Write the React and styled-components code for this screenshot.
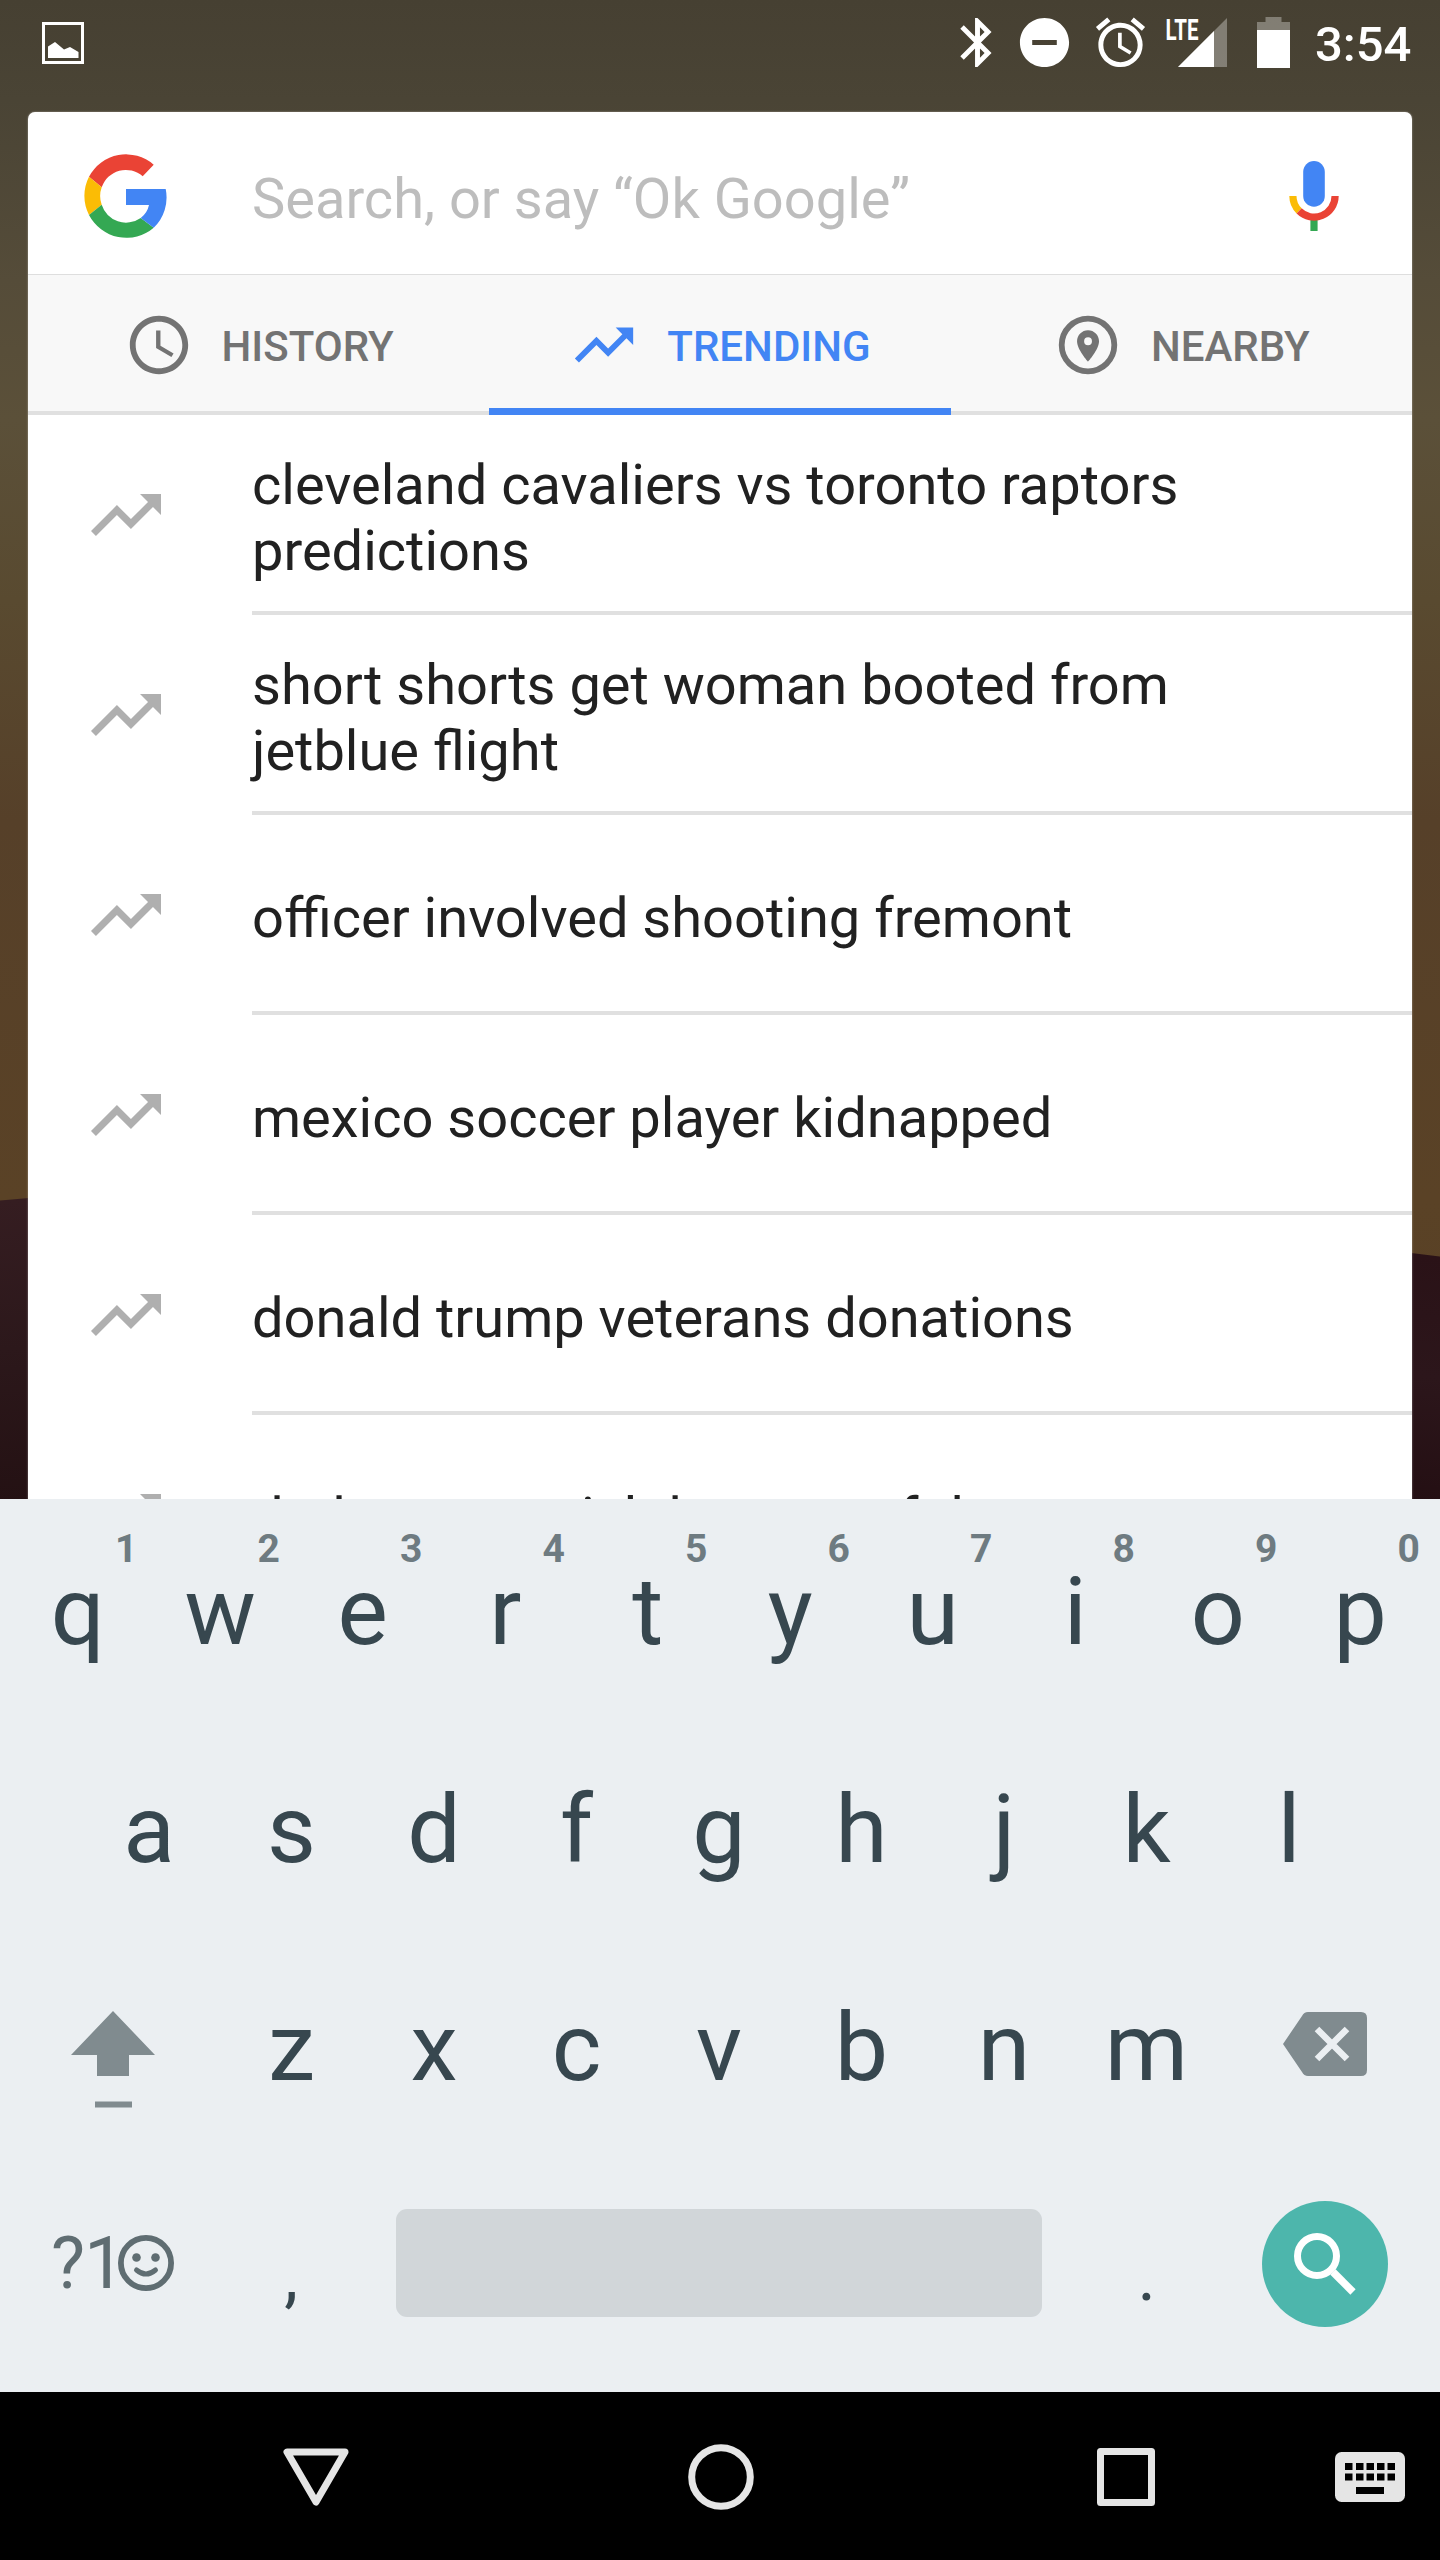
import React, { Component } from "react"
import styled, { createGlobalStyle } from "styled-components"
import { MdAlarm, MdBluetooth, MdDoNotDisturbOn, MdSchedule, MdTrendingUp } from "react-icons/md"

const GlobalStyle = createGlobalStyle`
  * { box-sizing: border-box; }
  body {
    margin: 0;
    background: #000;
    font-family: Roboto, "Noto Sans", sans-serif;
  }
  svg { display: block; flex: none; }
`;

const Screen = styled.div`
  display: flex;
  flex-direction: column;
  width: 1440px;
  height: 2560px;
  overflow: hidden;
`;

const Wallpaper = styled.div`
  height: 1499px;
  overflow: hidden;
  background:
    linear-gradient(175deg, transparent 3px, #351d21 4px, #2c181b 50%, #241113 100%) 0 1197px / 28px 304px no-repeat,
    linear-gradient(187deg, transparent 4px, #2a1217 5px, #2c161b 50%, #240f13 100%) 1412px 1252px / 28px 250px no-repeat,
    linear-gradient(#464032 0, #4a4435 100px, #554c39 280px, #5b5039 420px, #594a30 600px, #564029 820px, #5a4226 1200px, #573f24 1499px);
`;

const StatusBar = styled.div`
  display: flex;
  align-items: center;
  height: 85px;
  padding: 0 28px 0 42px;
  color: #fff;
`;

const StatusIcon = styled.span`
  margin-left: ${props => props.$gap}px;
`;

const Clock = styled.span`
  margin: 0 0 -4px 25px;
  font-size: 49px;
  font-weight: 500;
  line-height: 56px;
`;

const Card = styled.div`
  height: 1500px;
  margin: 27px 28px 0;
  border-radius: 7px 7px 0 0;
  background: #fff;
  box-shadow: 0 0 2px rgba(255, 255, 255, 0.5);
`;

const SearchBox = styled.div`
  display: flex;
  align-items: center;
  height: 163px;
  padding: 6px 73px 0 56px;
  border-bottom: 1px solid #dedede;
`;

const Hint = styled.span`
  flex: 1;
  padding: 6px 0 0 84px;
  color: #bdbdbd;
  font-size: 56px;
  line-height: 66px;
`;

const Tabs = styled.div`
  display: flex;
  height: 140px;
  background: #f8f8f8;
  box-shadow: inset 0 -4px 0 #e0e0e0;
`;

const Tab = styled.div`
  display: flex;
  flex: 1;
  align-items: center;
  justify-content: center;
  gap: 28px;
  padding-top: ${props => (props.$active ? "7px" : "0")};
  border-bottom: ${props => (props.$active ? "7px solid #4285f4" : "none")};
  color: ${props => (props.$active ? "#4285f4" : "#737373")};
  font-size: 42px;
  font-weight: 500;
  line-height: 50px;

  span { padding-top: 3px; }
`;

const Row = styled.div`
  display: flex;
  align-items: center;
  height: 200px;
  padding-left: 56px;
  color: #afafaf;
`;

const Suggestion = styled.div`
  display: flex;
  flex: 1;
  align-items: center;
  height: 200px;
  margin-left: 84px;
  padding: 10px 180px 0 0;
  border-bottom: 4px solid #e0e0e0;
  color: #212121;
  font-size: 56px;
  line-height: 66px;
`;

const Keyboard = styled.div`
  height: 893px;
  padding: 4px 8px 0 6px;
  background: #ebeff2;
  color: #37474f;
`;

const KeyRow = styled.div`
  display: flex;
  justify-content: center;
  height: 218px;
`;

const Key = styled.div`
  position: relative;
  display: flex;
  justify-content: center;
  width: 142.5px;
  height: 218px;
  padding-top: ${props => (props.$small ? 79 : 54)}px;
`;

const Letter = styled.span`
  font-size: ${props => (props.$small ? 70 : 95)}px;
  line-height: ${props => (props.$small ? 80 : 110)}px;
`;

const KeyNumber = styled.span`
  position: absolute;
  top: 26px;
  right: 11.5px;
  color: #6e7b81;
  font-size: 39px;
  font-weight: 700;
  line-height: 40px;
`;

const IconKey = styled.div`
  display: flex;
  justify-content: center;
  width: 213.9px;
  padding-top: ${props => props.$top}px;
  color: #808b8f;
`;

const SymbolKey = styled.div`
  display: flex;
  align-items: center;
  width: 213.9px;
  height: 212px;
  padding-left: 45px;
  color: #5f6d72;
  font-size: 72px;
  letter-spacing: -1px;

  svg { margin-left: -6px; }
`;

const SpaceBar = styled.div`
  width: 646px;
  height: 108px;
  margin: 52px 34px 0 33px;
  border-radius: 11px;
  background: #d1d6d9;
`;

const SearchKey = styled.div`
  display: flex;
  align-items: center;
  justify-content: center;
  width: 126px;
  height: 126px;
  border-radius: 50%;
  background: #4db6ac;
`;

const NavBar = styled.div`
  display: flex;
  align-items: center;
  height: 168px;
  padding: 1px 34px 0 283px;
  background: #000;
  color: #e5e5e5;
`;

const NavButton = styled.div`
  margin-left: ${props => props.$gap || 0}px;
`;

const PictureIcon = () => (
  <svg width="42" height="42" viewBox="0 0 42 42" fill="#fff">
    <path d="M1.5 1.5h39v39h-39z" fill="none" stroke="#fff" strokeWidth="3" />
    <path d="M6 24.5L13 20l9 7.5 6-2.5 8.5 5V36H6z" />
  </svg>
)

const SignalIcon = () => (
  <svg width="60" height="50" viewBox="0 0 60 50" fill="#fff" overflow="visible">
    <path d="M60 0v49H11z" opacity="0.32" />
    <path d="M47 13v36H11z" />
    <text x="-1.500" y="22" fontSize="29" fontWeight="700" textLength="33" lengthAdjust="spacingAndGlyphs">LTE</text>
  </svg>
)

const BatteryIcon = () => (
  <svg width="33" height="51" viewBox="0 0 33 51" fill="#fff">
    <path d="M8.5 0h16v5H33v8H0V5h8.500z" opacity="0.32" />
    <path d="M0 13h33v38H0z" />
  </svg>
)

const GoogleIcon = () => (
  <svg width="84" height="84" viewBox="0 0 84 84">
    <path fill="#ea4335" d="M5 22.700A42 42 0 0 1 69.700 10.700L58.700 22.300A25.500 25.500 0 0 0 17.700 33.300z" />
    <path fill="#fbbc05" d="M5 22.700A42 42 0 0 0 5 61L17.700 50.700A25.500 25.500 0 0 1 17.700 33.300z" />
    <path fill="#34a853" d="M5 61A42 42 0 0 0 69.700 73.700L56.700 64A25.500 25.500 0 0 1 17.700 50.700z" />
    <path fill="#4285f4" d="M42 35H81.700A42 42 0 0 1 69.700 73.700L56.700 64A22 22 0 0 0 65 51H42z" />
  </svg>
)

const MicIcon = () => (
  <svg width="50" height="70" viewBox="0 0 50 70" fill="none" strokeWidth="7.200">
    <rect x="14.200" width="21.600" height="45.700" rx="10.800" fill="#4285f4" />
    <path d="M25 58v12" stroke="#34a853" />
    <path d="M3.900 35A21.100 21.100 0 0 0 10.100 49.900" stroke="#fbbc05" />
    <path d="M10.100 49.900A21.100 21.100 0 0 0 46.100 35" stroke="#ea4335" />
  </svg>
)

const NearbyIcon = () => (
  <svg width="70" height="70" viewBox="0 0 70 70" fill="currentColor">
    <circle cx="35" cy="35" r="26.300" fill="none" stroke="currentColor" strokeWidth="5.800" />
    <path
      transform="translate(16.200 17.100) scale(1.570)"
      d="M12 2C8.130 2 5 5.130 5 9c0 5.250 7 13 7 13s7-7.750 7-13c0-3.870-3.130-7-7-7zm0 9.500a2.500 2.500 0 0 1 0-5 2.500 2.500 0 0 1 0 5z"
    />
  </svg>
)

const ShiftIcon = () => (
  <svg width="84" height="97" viewBox="0 0 84 97" fill="currentColor">
    <path d="M42 0l42 44H58v21H26V44H0zM24 90.500h37v6H24z" />
  </svg>
)

const BackspaceIcon = () => (
  <svg width="84" height="64" viewBox="0 0 84 64">
    <path fill="currentColor" d="M25 0h53q6 0 6 6v52q0 6-6 6H25q-4 0-6-4L0 32 19 4q2-4 6-4z" />
    <path d="M34 17l30 30M64 17L34 47" stroke="#ebeff2" strokeWidth="6.500" />
  </svg>
)

const SmileyIcon = () => (
  <svg width="56" height="56" viewBox="0 0 56 56" fill="none" stroke="currentColor" strokeWidth="5.800">
    <circle cx="28" cy="28" r="25.100" />
    <g fill="currentColor" stroke="none">
      <circle cx="18.500" cy="22.500" r="4.300" />
      <circle cx="37.500" cy="22.500" r="4.300" />
    </g>
    <path d="M18.500 35q9.500 8 19 0" strokeWidth="5" strokeLinecap="round" />
  </svg>
)

const MagnifierIcon = () => (
  <svg width="62" height="62" viewBox="0 0 62 62" fill="none" stroke="#fff">
    <circle cx="23" cy="23" r="19.500" strokeWidth="7" />
    <path d="M39 39l20 20" strokeWidth="7.500" />
  </svg>
)

const BackIcon = () => (
  <svg width="66" height="58" viewBox="0 0 66 58" fill="none" stroke="currentColor" strokeWidth="7" strokeLinejoin="round">
    <path d="M4 4h58L33 54z" />
  </svg>
)

const HomeIcon = () => (
  <svg width="66" height="66" viewBox="0 0 66 66" fill="none" stroke="currentColor" strokeWidth="7">
    <circle cx="33" cy="33" r="29.300" />
  </svg>
)

const RecentIcon = () => (
  <svg width="58" height="58" viewBox="0 0 58 58" fill="none" stroke="currentColor" strokeWidth="7" strokeLinejoin="round">
    <path d="M3.500 3.500h51v51h-51z" />
  </svg>
)

const KeyboardIcon = () => (
  <svg width="70" height="50" viewBox="0 0 70 50">
    <rect width="70" height="50" rx="6.500" fill="currentColor" />
    {[10, 21, 31.5, 42, 52.5].map(x => (
      <path key={x} d={`M${x} 11h7.500v7h-7.500zM${x} 21.500h7.500v7h-7.500z`} />
    ))}
    <path d="M21 35h28v7H21z" />
  </svg>
)

const suggestions = [
  "cleveland cavaliers vs toronto raptors predictions",
  "short shorts get woman booted from jetblue flight",
  "officer involved shooting fremont",
  "mexico soccer player kidnapped",
  "donald trump veterans donations",
  "dad saves a rich boy out of the"
]

const renderKeys = letters =>
  letters.split("").map(letter => (
    <Key key={letter}><Letter>{letter}</Letter></Key>
  ))

class App extends Component {
  render() {
    return (
      <Screen>
        <GlobalStyle />
        <Wallpaper>
          <StatusBar>
            <PictureIcon />
            <StatusIcon $gap={864}><MdBluetooth size={59} /></StatusIcon>
            <StatusIcon $gap={8}><MdDoNotDisturbOn size={59} /></StatusIcon>
            <StatusIcon $gap={17}><MdAlarm size={59} /></StatusIcon>
            <StatusIcon $gap={17}><SignalIcon /></StatusIcon>
            <StatusIcon $gap={30}><BatteryIcon /></StatusIcon>
            <Clock>3:54</Clock>
          </StatusBar>
          <Card>
            <SearchBox>
              <GoogleIcon />
              <Hint>Search, or say “Ok Google”</Hint>
              <MicIcon />
            </SearchBox>
            <Tabs>
              <Tab><MdSchedule size={70} /><span>HISTORY</span></Tab>
              <Tab $active><MdTrendingUp size={70} /><span>TRENDING</span></Tab>
              <Tab><NearbyIcon /><span>NEARBY</span></Tab>
            </Tabs>
            {suggestions.map(text => (
              <Row key={text}>
                <MdTrendingUp size={84} />
                <Suggestion>{text}</Suggestion>
              </Row>
            ))}
          </Card>
        </Wallpaper>
        <Keyboard>
          <KeyRow>
            {"qwertyuiop".split("").map((letter, i) => (
              <Key key={letter}>
                <Letter>{letter}</Letter>
                <KeyNumber>{(i + 1) % 10}</KeyNumber>
              </Key>
            ))}
          </KeyRow>
          <KeyRow>{renderKeys("asdfghjkl")}</KeyRow>
          <KeyRow>
            <IconKey $top={72}><ShiftIcon /></IconKey>
            {renderKeys("zxcvbnm")}
            <IconKey $top={73}><BackspaceIcon /></IconKey>
          </KeyRow>
          <KeyRow>
            <SymbolKey>?1<SmileyIcon /></SymbolKey>
            <Key $small><Letter $small>,</Letter></Key>
            <SpaceBar />
            <Key $small><Letter $small>.</Letter></Key>
            <IconKey $top={44}>
              <SearchKey><MagnifierIcon /></SearchKey>
            </IconKey>
          </KeyRow>
        </Keyboard>
        <NavBar>
          <NavButton><BackIcon /></NavButton>
          <NavButton $gap={339}><HomeIcon /></NavButton>
          <NavButton $gap={343}><RecentIcon /></NavButton>
          <NavButton $gap={180}><KeyboardIcon /></NavButton>
        </NavBar>
      </Screen>
    )
  }
}

export default App
